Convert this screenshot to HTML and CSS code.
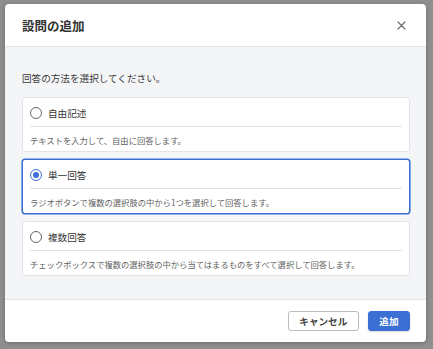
FILE: index.html
```html
<!DOCTYPE html>
<html lang="ja">
<head>
<meta charset="UTF-8">
<meta name="viewport" content="width=device-width, initial-scale=1.0">
<title>設問の追加</title>
<link rel="stylesheet" href="styles.css">
</head>
<body>
<div class="dialog">
  <div class="dialog-header">
    <h1 class="dialog-title">設問の追加</h1>
    <button class="close-button" aria-label="閉じる">
      <svg width="9" height="9" viewBox="0 0 9 9">
        <path d="M1 1 L8 8 M8 1 L1 8" stroke="#6b6b6b" stroke-width="1.2" stroke-linecap="round" fill="none"/>
      </svg>
    </button>
  </div>

  <div class="dialog-body">
    <p class="lead">回答の方法を選択してください。</p>
    <div class="options">
      <label class="option">
        <div class="option-head">
          <span class="radio"></span>
          <span class="option-label">自由記述</span>
        </div>
        <div class="option-desc">テキストを入力して、自由に回答します。</div>
      </label>
      <label class="option selected">
        <div class="option-head">
          <span class="radio"></span>
          <span class="option-label">単一回答</span>
        </div>
        <div class="option-desc">ラジオボタンで複数の選択肢の中から1つを選択して回答します。</div>
      </label>
      <label class="option">
        <div class="option-head">
          <span class="radio"></span>
          <span class="option-label">複数回答</span>
        </div>
        <div class="option-desc">チェックボックスで複数の選択肢の中から当てはまるものをすべて選択して回答します。</div>
      </label>
    </div>
  </div>

  <div class="dialog-footer">
    <button class="btn btn-cancel">キャンセル</button>
    <button class="btn btn-primary">追加</button>
  </div>
</div>
</body>
</html>
```

FILE: styles.css
```css
body {
  margin: 0;
  padding: 4px 7px 7px 5px;
  background: #8f8f8f;
  font-family: "Noto Sans CJK JP", "Noto Sans", sans-serif;
  color: #333;
}

.dialog {
  background: #fff;
  border-radius: 4px;
  overflow: hidden;
  box-shadow: 0 1px 4px rgba(0, 0, 0, 0.25);
}

.dialog-header {
  height: 42px;
  padding: 0 20px 0 17px;
  display: flex;
  align-items: center;
  justify-content: space-between;
  border-bottom: 1px solid #e4e5e8;
}

.dialog-title {
  margin: 0;
  font-size: 12.5px;
  font-weight: 700;
  color: #333;
}

.close-button {
  border: none;
  background: none;
  padding: 0;
  width: 9px;
  height: 9px;
  display: flex;
}

.dialog-body {
  background: #f4f5f7;
  padding: 24px 16px 23px 17px;
  border-bottom: 1px solid #e2e3e6;
}

.lead {
  margin: 0 0 12px;
  font-size: 9.6px;
  line-height: 14px;
  color: #3a3a3a;
}

.options {
  display: flex;
  flex-direction: column;
  gap: 7px;
}

.option {
  display: block;
  background: #fff;
  border: 1px solid #e3e4e8;
  border-radius: 3px;
  padding: 7px 7px 4px;
}

.option.selected {
  border-color: #3b6fd4;
  box-shadow: 0 0 0 0.6px #3b6fd4;
}

.option-head {
  height: 16px;
  display: flex;
  align-items: center;
  gap: 6px;
  padding-bottom: 5px;
  border-bottom: 1px solid #e1e2e5;
}

.radio {
  width: 12px;
  height: 12px;
  box-sizing: border-box;
  border: 1.3px solid #666;
  border-radius: 50%;
  background: #fff;
  display: flex;
  align-items: center;
  justify-content: center;
}

.selected .radio {
  border-color: #3b6fd4;
}

.selected .radio::after {
  content: "";
  width: 6px;
  height: 6px;
  border-radius: 50%;
  background: #3b6fd4;
}

.option-label {
  font-size: 9.6px;
  color: #333;
}

.option-desc {
  padding-top: 6px;
  font-size: 8.3px;
  line-height: 14px;
  color: #5f5f5f;
}

.dialog-footer {
  height: 42px;
  padding: 0 16px;
  display: flex;
  align-items: center;
  justify-content: flex-end;
  gap: 9px;
}

.btn {
  height: 20px;
  padding: 0 10.5px;
  border-radius: 3px;
  font-family: inherit;
  font-size: 9.6px;
  font-weight: 700;
  line-height: 18px;
}

.btn-cancel {
  background: #fff;
  border: 1px solid #bcbcbc;
  color: #444;
}

.btn-primary {
  background: #3b6fd4;
  border: 1px solid #3b6fd4;
  color: #fff;
  box-shadow: 0 1px 2px rgba(0, 0, 0, 0.15);
}
```
